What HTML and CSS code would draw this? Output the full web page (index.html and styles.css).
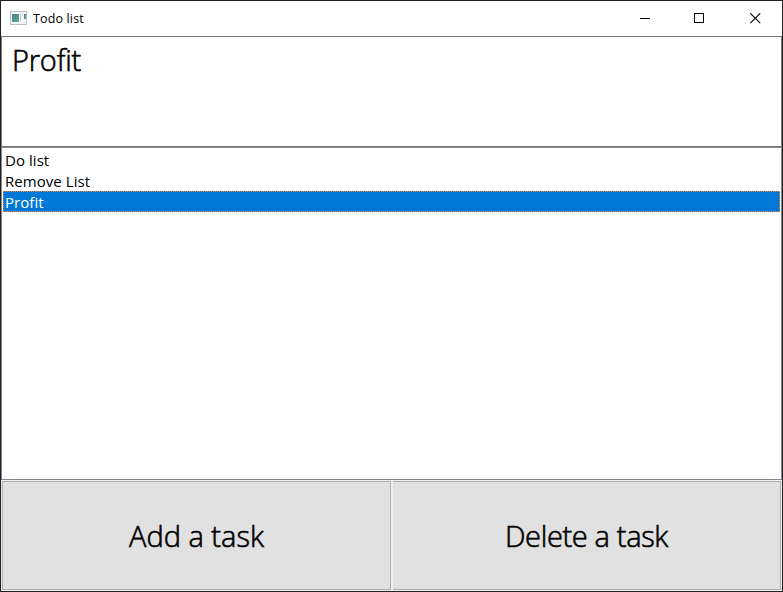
FILE: index.html
```html
<!DOCTYPE html>
<html lang="en">
<head>
<meta charset="utf-8">
<title>Todo list</title>
<link rel="stylesheet" href="styles.css">
</head>
<body>
<main class="window">
  <header class="titlebar">
    <svg class="app-icon" width="18" height="14" viewBox="0 0 18 14" shape-rendering="crispEdges">
      <defs><linearGradient id="pane" x2="1" y2="1"><stop stop-color="#427b9b"/><stop offset="1" stop-color="#62b184"/></linearGradient></defs>
      <path fill="#b9bdc0" d="M0 0h17v14H0z"/>
      <path fill="#f4f5f6" d="M1 1h15v12H1z"/>
      <path fill="url(#pane)" d="M2 3h7v8H2z"/>
      <path fill="#c5cbd0" d="M10 3h1v8h-1zM12 3h1v1h-1z"/>
      <path fill="url(#pane)" d="M14 3h2v5h-2z"/>
    </svg>
    <h1 class="title"><span>Todo list</span></h1>
    <div class="controls">
      <svg width="11" height="11" shape-rendering="crispEdges"><path d="M0 5.5h10" stroke="#000"/></svg>
      <svg width="11" height="11" shape-rendering="crispEdges"><path d="M.5.5h9v9h-9z" fill="none" stroke="#000"/></svg>
      <svg width="11" height="11"><path d="M.3.3l9.9 9.9M10.2.3L.3 10.2" stroke="#000" stroke-width="1.1"/></svg>
    </div>
  </header>
  <div class="entry" contenteditable="true" spellcheck="false">Profit</div>
  <ul class="tasks">
    <li>Do list</li>
    <li class="remove">Remove List</li>
    <li class="selected">Profit</li>
  </ul>
  <div class="actions">
    <button class="add">Add a task</button>
    <button class="delete">Delete a task</button>
  </div>
</main>
</body>
</html>
```
FILE: styles.css
```css
* { box-sizing: border-box; }
body { margin: 0; font-family: "Open Sans", "Noto Sans", sans-serif; color: #000; }
.window {
  width: 783px; height: 592px; border: 1px solid #231f23; background: #f0f0f0;
  display: grid; grid-template-rows: 35px 111px 333px 111px;
}
.titlebar { display: flex; align-items: flex-start; background: #fff; padding: 10px 21px 0 9px; }
.app-icon { display: block; }
.title { margin: -1px 0 0 5px; font-size: 12.5px; line-height: 17px; font-weight: 400; letter-spacing: .15px; }
.controls { margin-left: auto; display: flex; gap: 45px; padding-top: 2px; }
.controls svg { display: block; }
.controls svg:nth-child(2) { margin-left: -2px; }
.entry {
  border: 1px solid #7a7a7a; background: #fff; padding: 4px 10px;
  font-size: 29px; line-height: 38px; outline: none; letter-spacing: -.2px; font-weight: 300;
  -webkit-text-stroke: .6px #000;
}
.tasks {
  margin: 0; border: 1px solid #828790; background: #fff; padding: 1px;
  list-style: none; font-size: 15px; line-height: 22px; letter-spacing: .05px;
}
.tasks li { height: 21px; padding: 0 2px; }
.tasks .selected { background: #0078d7; color: #fff; border: 1px dotted #ff8728; padding: 0 1px; line-height: 20px; }
.actions { display: grid; grid-template-columns: 389px 388px; gap: 2px; padding: 1px; }
.actions button {
  border: 1px solid #adadad; background: #e1e1e1; color: #000; padding: 1px 0 0;
  font: 300 29px/38px "Open Sans", "Noto Sans", sans-serif; letter-spacing: 0;
  -webkit-text-stroke: .6px #000;
}
.actions .delete { border-left: 0; letter-spacing: -.35px; }
```
